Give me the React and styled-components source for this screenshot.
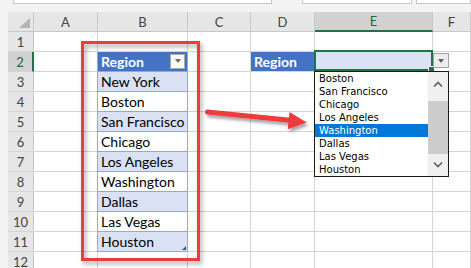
import React from 'react';
import styled, { createGlobalStyle, css } from 'styled-components';

const GlobalStyle = createGlobalStyle`
  html, body {
    margin: 0;
    padding: 0;
    background: #fff;
  }
  * {
    box-sizing: border-box;
  }
`;

const Page = styled.div`
  position: relative;
  width: 471px;
  height: 268px;
  overflow: hidden;
  background: #f3f3f3;
  font-family: Lato, 'Liberation Sans', sans-serif;
`;

const TopBar = styled.div`
  display: flex;
  height: 4px;
  padding-left: 13px;
`;

const TopBox = styled.div`
  flex: ${(p) => (p.$grow ? '1' : `0 0 ${p.$w}px`)};
  margin-right: ${(p) => p.$gap || 0}px;
  background: #fff;
  border: 1px solid #c6c6c6;
  border-top: none;
`;

const Sheet = styled.div`
  display: grid;
  grid-template-columns: 26px 64px 90px 63px 64px 118px 1fr;
  grid-auto-rows: 20px;
  margin: 8px 0 0 8px;
  background: #fff;
`;

const Corner = styled.div`
  position: relative;
  background: #e6e6e6;
  border-right: 1px solid #c8c8c8;
  border-bottom: 1px solid #c8c8c8;

  &::after {
    content: '';
    position: absolute;
    left: 11px;
    top: 6px;
    width: 11px;
    height: 10px;
    background: #b5b5b5;
    clip-path: polygon(100% 0, 100% 100%, 0 100%);
  }
`;

const ColHead = styled.div`
  display: flex;
  align-items: center;
  justify-content: center;
  font-size: 13px;
  color: ${(p) => (p.$active ? '#1d6b40' : '#444')};
  background: ${(p) => (p.$active ? '#d2d2d2' : '#e6e6e6')};
  border-right: 1px solid #c8c8c8;
  border-bottom: ${(p) => (p.$active ? '2px solid #217346' : '1px solid #c8c8c8')};
`;

const RowHead = styled.div`
  display: flex;
  align-items: center;
  justify-content: center;
  font-size: 13px;
  color: ${(p) => (p.$active ? '#1d6b40' : '#444')};
  background: ${(p) => (p.$active ? '#d2d2d2' : '#e6e6e6')};
  border-right: ${(p) => (p.$active ? '2px solid #217346' : '1px solid #c8c8c8')};
  border-bottom: 1px solid #d4d4d4;
`;

const Cell = styled.div`
  position: relative;
  display: flex;
  align-items: flex-end;
  padding: 0 3px 1px;
  font-size: 14px;
  line-height: 17px;
  white-space: nowrap;
  color: #000;
  background: #fff;
  border-right: 1px solid #d4d4d4;
  border-bottom: 1px solid #d4d4d4;

  ${(p) =>
    p.$kind === 'label' &&
    css`
      background: #4472c4;
      color: #fff;
      font-weight: 700;
    `}

  ${(p) =>
    p.$kind === 'head' &&
    css`
      padding-right: 2px;
      background: #4472c4;
      color: #fff;
      font-weight: 700;
      border-right-color: #8ea9db;
      border-bottom-color: #8ea9db;
      box-shadow: -1px 0 0 #8ea9db;
    `}

  ${(p) =>
    (p.$kind === 'band' || p.$kind === 'row') &&
    css`
      background: ${p.$kind === 'band' ? '#d9e1f2' : '#fff'};
      border-right-color: #8ea9db;
      border-bottom-color: #8ea9db;
      box-shadow: -1px 0 0 #8ea9db;
    `}

  ${(p) =>
    p.$selected &&
    css`
      z-index: 2;
      background: #dae3f3;
    `}
`;

const ResizeGrip = styled.span`
  position: absolute;
  right: 1px;
  bottom: 1px;
  width: 4px;
  height: 4px;
  background: #2f5597;
  clip-path: polygon(100% 0, 100% 100%, 0 100%);
`;

const FilterButton = styled.span`
  display: flex;
  align-items: center;
  justify-content: center;
  align-self: center;
  margin-left: auto;
  width: 15px;
  height: 15px;
  background: #fbfbfb;
  border: 1px solid #a9a9a9;

  &::after {
    content: '';
    border-left: 3.5px solid transparent;
    border-right: 3.5px solid transparent;
    border-top: 4px solid #6b6b6b;
  }
`;

const Selection = styled.span`
  position: absolute;
  left: -1px;
  right: -1px;
  top: -2px;
  bottom: 0;
  border: 2px solid #217346;

  &::after {
    content: '';
    position: absolute;
    right: -4px;
    bottom: -4px;
    width: 5px;
    height: 5px;
    background: #217346;
    border: 1px solid #fff;
  }
`;

const DropButton = styled.span`
  position: absolute;
  left: 433px;
  top: 53px;
  width: 16px;
  height: 15px;
  display: flex;
  align-items: center;
  justify-content: center;
  background: #ececec;
  border: 1px solid #a3a3a3;
  z-index: 3;

  &::after {
    content: '';
    border-left: 3.5px solid transparent;
    border-right: 3.5px solid transparent;
    border-top: 4px solid #5f5f5f;
  }
`;

const DropList = styled.div`
  position: absolute;
  left: 314px;
  top: 71px;
  width: 135px;
  height: 106px;
  display: flex;
  background: #fff;
  border: 1px solid #1a1a1a;
  z-index: 4;
`;

const Items = styled.div`
  flex: 0 0 113px;
  display: flex;
  flex-direction: column;
`;

const Item = styled.div`
  height: 13px;
  padding-left: 4px;
  font-family: 'DejaVu Sans', Verdana, sans-serif;
  font-size: 10px;
  line-height: 13px;
  white-space: nowrap;
  color: ${(p) => (p.$active ? '#fff' : '#000')};
  background: ${(p) => (p.$active ? '#0078d7' : 'transparent')};
`;

const ScrollBar = styled.div`
  flex: 1;
  display: flex;
  flex-direction: column;
  background: #f0f0f0;
`;

const ScrollArrow = styled.div`
  flex: ${(p) => (p.$grow ? '1' : `0 0 ${p.$h}px`)};
  display: flex;
  align-items: center;
  justify-content: center;
`;

const Track = styled.div`
  flex: 0 0 ${(p) => p.$h}px;
`;

const Thumb = styled.div`
  flex: 0 0 53px;
  background: #cdcdcd;
`;

const Highlight = styled.div`
  position: absolute;
  left: 81px;
  top: 41px;
  width: 119px;
  height: 220px;
  border: 3px solid #ee3b3e;
  filter: drop-shadow(2px 3px 2px rgba(0, 0, 0, 0.35));
  pointer-events: none;
  z-index: 5;
`;

const ArrowSvg = styled.svg`
  position: absolute;
  left: 200px;
  top: 100px;
  overflow: visible;
  pointer-events: none;
  z-index: 5;
`;

const Chevron = ({ up }) => (
  <svg width="10" height="6" viewBox="0 0 10 6">
    <polyline
      points={up ? '1,5.5 5,1.5 9,5.5' : '1,0.5 5,4.5 9,0.5'}
      fill="none"
      stroke="#606060"
      strokeWidth="1.6"
    />
  </svg>
);

const columns = ['A', 'B', 'C', 'D', 'E', 'F'];
const cities = [
  'New York',
  'Boston',
  'San Francisco',
  'Chicago',
  'Los Angeles',
  'Washington',
  'Dallas',
  'Las Vegas',
  'Houston',
];
const options = [
  'Boston',
  'San Francisco',
  'Chicago',
  'Los Angeles',
  'Washington',
  'Dallas',
  'Las Vegas',
  'Houston',
];

const renderCell = (row, col) => {
  const key = `${col}${row}`;
  if (col === 'B' && row === 2) {
    return (
      <Cell key={key} $kind="head">
        Region
        <FilterButton />
      </Cell>
    );
  }
  if (col === 'B' && row >= 3 && row <= 11) {
    return (
      <Cell key={key} $kind={row % 2 === 1 ? 'band' : 'row'}>
        {cities[row - 3]}
        {row === 11 && <ResizeGrip />}
      </Cell>
    );
  }
  if (col === 'D' && row === 2) {
    return (
      <Cell key={key} $kind="label">
        Region
      </Cell>
    );
  }
  if (col === 'E' && row === 2) {
    return (
      <Cell key={key} $selected>
        <Selection />
      </Cell>
    );
  }
  return <Cell key={key} />;
};

const rows = Array.from({ length: 12 }, (_, i) => i + 1);

const App = () => (
  <Page>
    <GlobalStyle />
    <TopBar>
      <TopBox $w={259} $gap={30} />
      <TopBox $w={110} $gap={4} />
      <TopBox $grow />
    </TopBar>
    <Sheet>
      <Corner />
      {columns.map((c) => (
        <ColHead key={c} $active={c === 'E'}>
          {c}
        </ColHead>
      ))}
      {rows.map((r) => (
        <React.Fragment key={r}>
          <RowHead $active={r === 2}>{r}</RowHead>
          {columns.map((c) => renderCell(r, c))}
        </React.Fragment>
      ))}
    </Sheet>

    <DropButton />
    <DropList>
      <Items>
        {options.map((o) => (
          <Item key={o} $active={o === 'Washington'}>
            {o}
          </Item>
        ))}
      </Items>
      <ScrollBar>
        <ScrollArrow $h={24}>
          <Chevron up />
        </ScrollArrow>
        <Track $h={5} />
        <Thumb />
        <ScrollArrow $grow>
          <Chevron />
        </ScrollArrow>
      </ScrollBar>
    </DropList>

    <Highlight />
    <ArrowSvg width="112" height="36" viewBox="0 0 112 36">
      <defs>
        <filter id="arrowShadow" x="-20%" y="-60%" width="140%" height="220%">
          <feDropShadow dx="2" dy="3" stdDeviation="1.5" floodColor="#000" floodOpacity="0.35" />
        </filter>
      </defs>
      <g filter="url(#arrowShadow)" fill="#ee3b3e">
        <line x1="7.5" y1="12" x2="90" y2="20.2" stroke="#ee3b3e" strokeWidth="5" strokeLinecap="round" />
        <polygon points="89.5,12 87.7,29.3 106.7,22.6" />
      </g>
    </ArrowSvg>
  </Page>
);

export default App;
